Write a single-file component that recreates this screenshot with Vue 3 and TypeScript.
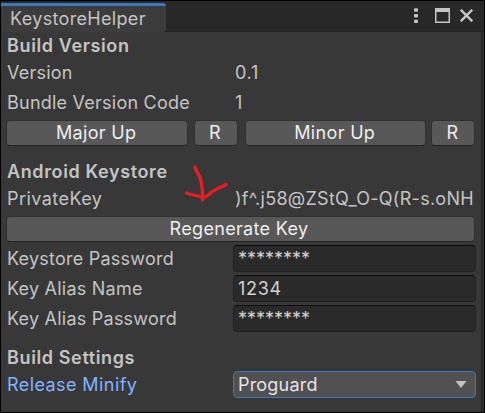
<script setup lang="ts">
import { ref } from 'vue'

const version = ref('0.1')
const bundleCode = ref(1)
const privateKey = ref(')f^.j58@ZStQ_O-Q(R-s.oNH')
const minify = ref('Proguard')

const fields = [
  { label: 'Keystore Password', value: '********', secret: true },
  { label: 'Key Alias Name', value: '1234', secret: false },
  { label: 'Key Alias Password', value: '********', secret: true },
]
</script>

<template>
  <div class="window">
    <header class="bar">
      <div class="tab"><span>KeystoreHelper</span></div>
      <div class="controls">
        <svg class="dots" width="4" height="16" viewBox="0 0 4 16" fill="#c4c4c4">
          <rect x="0" y="0.3" width="4" height="3.4" rx="0.8" />
          <rect x="0" y="6" width="4" height="3.4" rx="0.8" />
          <rect x="0" y="11.7" width="4" height="3.4" rx="0.8" />
        </svg>
        <svg class="max" width="15" height="15" viewBox="0 0 15 15">
          <path fill="#c4c4c4" fill-rule="evenodd" d="M0 0H15V15H0ZM1.5 4V13.5H13.5V4Z" />
        </svg>
        <svg class="close" width="13" height="13" viewBox="0 0 13 13">
          <path d="M0.700 0.700L12.300 12.300M12.300 0.700L0.700 12.300" stroke="#c4c4c4" stroke-width="2.4" fill="none" />
        </svg>
      </div>
    </header>

    <main class="body">
      <section>
        <h2>Build Version</h2>
        <div class="row"><label>Version</label><span class="value number">{{ version }}</span></div>
        <div class="row"><label>Bundle Version Code</label><span class="value number">{{ bundleCode }}</span></div>
        <div class="buttons">
          <button>Major Up</button>
          <button class="small first">R</button>
          <button>Minor Up</button>
          <button class="small last">R</button>
        </div>
      </section>

      <section>
        <h2>Android Keystore</h2>
        <div class="row">
          <label class="private">PrivateKey</label><span class="value key">{{ privateKey }}</span>
          <svg class="arrow" width="46" height="40" viewBox="0 0 46 40">
            <path
              d="M10 3C10.700 6.500 13 8.500 14.500 12C17 18 16.500 23 17.500 28L17.500 36M1.500 29C5.500 31 12 31 17.500 33.500C22 34 25 28.500 30 26C34 23.500 37 23 41 20.500"
              fill="none" stroke="#ed1c24" stroke-width="3.300" stroke-linecap="round" stroke-linejoin="round"
            />
          </svg>
        </div>
        <div class="buttons wide"><button>Regenerate Key</button></div>
        <div v-for="f in fields" :key="f.label" class="row">
          <label>{{ f.label }}</label>
          <div class="field" :class="{ secret: f.secret }">{{ f.value }}</div>
        </div>
      </section>

      <section>
        <h2>Build Settings</h2>
        <div class="row">
          <label class="active">Release Minify</label>
          <div class="select">
            <span>{{ minify }}</span>
            <svg width="12" height="7" viewBox="0 0 12 7"><path d="M0.500 0H11.500L6 7Z" fill="#c4c4c4" /></svg>
          </div>
        </div>
      </section>
    </main>
  </div>
</template>

<style>
body {
  margin: 0;
  background: #000;
}
</style>

<style scoped>
.window {
  box-sizing: border-box;
  width: 485px;
  height: 413px;
  border: 1px solid #000;
  background: #303030;
  color: #c4c4c4;
  font-family: Inter, "Liberation Sans", sans-serif;
  font-size: 18px;
  line-height: 22px;
  letter-spacing: 0.23px;
  white-space: nowrap;
  overflow: hidden;
}
.bar {
  display: flex;
  justify-content: space-between;
  box-sizing: border-box;
  height: 31px;
  padding-top: 2px;
  background: #282828;
  border-bottom: 1px solid #222;
}
.tab {
  box-sizing: border-box;
  width: 165px;
  height: 29px;
  padding: 2px 0 0 9px;
  background: #3c3c3c;
  border-top: 3px solid #3a79bb;
  border-radius: 0 3px 3px 0;
  letter-spacing: 0.33px;
}
.controls {
  display: flex;
  padding: 5px 11px 0 0;
}
.max {
  margin: 0 10px 0 17px;
}
.close {
  margin-top: 1px;
}
.body {
  box-sizing: border-box;
  width: 481px;
  height: 380px;
  padding: 1px 5px 0;
  background: #383838;
  border-right: 1px solid #202020;
}
section + section {
  margin-top: 13px;
}
h2 {
  margin: 0 0 1px;
  padding-left: 1px;
  height: 25px;
  line-height: 25px;
  font-size: 18px;
  font-weight: 600;
  letter-spacing: 0.62px;
}
.row {
  position: relative;
  display: flex;
  align-items: center;
  height: 27px;
  margin-bottom: 3px;
}
label {
  box-sizing: border-box;
  flex: none;
  width: 227px;
  padding-left: 1px;
}
label.private {
  letter-spacing: 0.45px;
}
label.active {
  color: #81b4ff;
  letter-spacing: 0.42px;
}
.value {
  padding-left: 2px;
}
.number {
  letter-spacing: 0.7px;
}
.key {
  letter-spacing: 0.28px;
}
.arrow {
  position: absolute;
  left: 179px;
  top: -21px;
}
.buttons {
  display: flex;
  gap: 6px;
  height: 26px;
  margin: 4px 1px 0 0;
}
.buttons.wide {
  margin-bottom: 3px;
}
button {
  box-sizing: border-box;
  flex: 1;
  padding: 0 1px 0 0;
  color: #eee;
  background: #585858;
  border: 1px solid #303030;
  border-bottom-color: #242424;
  border-radius: 4px;
  font: inherit;
  letter-spacing: 0.33px;
}
.wide button {
  padding-right: 3px;
}
button.small {
  flex: 0 0 44px;
}
button.small.first {
  margin-right: 1px;
}
button.small.last {
  margin-left: -1px;
}
.field,
.select {
  box-sizing: border-box;
  flex: 1;
  height: 27px;
  padding-left: 4px;
  line-height: 25px;
  color: #d2d2d2;
  background: #2a2a2a;
  border: 1px solid #212121;
  border-top-color: #0d0d0d;
  border-radius: 4px;
  letter-spacing: 0.7px;
}
.field.secret {
  letter-spacing: 0;
}
.select {
  display: flex;
  align-items: center;
  justify-content: space-between;
  padding-right: 8px;
  color: #e4e4e4;
  background: #515151;
  border-color: #3a79bb;
  letter-spacing: 0.2px;
}
</style>
